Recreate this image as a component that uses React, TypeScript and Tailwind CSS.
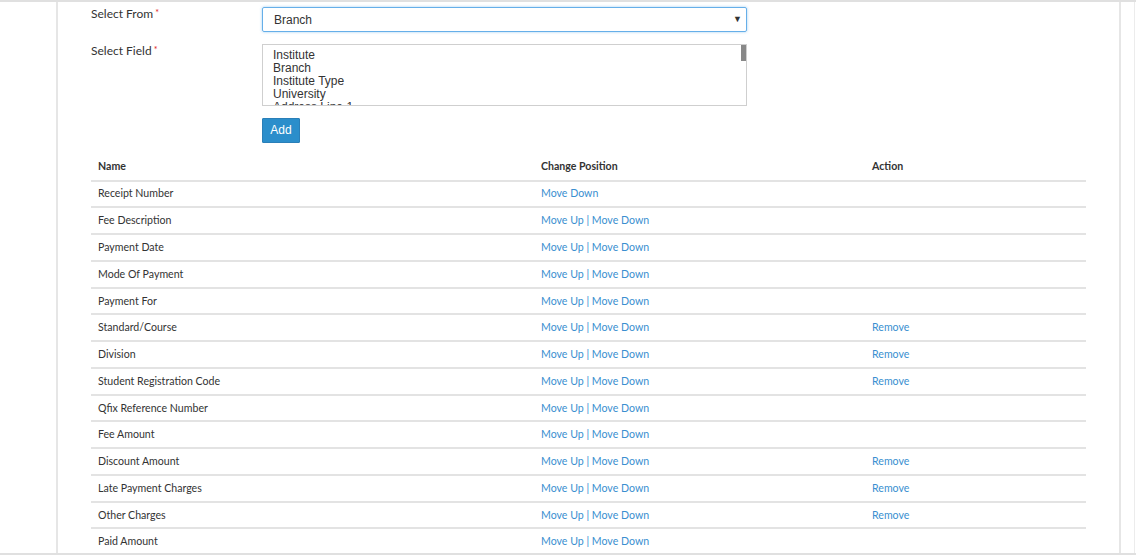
const fields = [
  { name: "Receipt Number", up: false, remove: false },
  { name: "Fee Description", up: true, remove: false },
  { name: "Payment Date", up: true, remove: false },
  { name: "Mode Of Payment", up: true, remove: false },
  { name: "Payment For", up: true, remove: false },
  { name: "Standard/Course", up: true, remove: true },
  { name: "Division", up: true, remove: true },
  { name: "Student Registration Code", up: true, remove: true },
  { name: "Qfix Reference Number", up: true, remove: false },
  { name: "Fee Amount", up: true, remove: false },
  { name: "Discount Amount", up: true, remove: true },
  { name: "Late Payment Charges", up: true, remove: true },
  { name: "Other Charges", up: true, remove: true },
  { name: "Paid Amount", up: true, remove: false },
];

const options = ["Institute", "Branch", "Institute Type", "University", "Address Line 1"];

function Label({ text }: { text: string }) {
  return (
    <label className="w-[171px] shrink-0 text-[12px] text-[#333] font-['Lato',sans-serif]">
      {text}
      <span className="relative -top-[2px] ml-[2px] text-[9px] text-[#e02020]">*</span>
    </label>
  );
}

export default function App() {
  return (
    <div className="h-[555px] overflow-hidden border-t-2 border-b-2 border-[#e0e0e0] bg-white font-['Lato',sans-serif]">
      <div className="flex h-full">
        <div className="ml-[56px] mr-[13px] h-full flex-1 border-x-2 border-[#e6e6e6] bg-white">
          <div className="pl-[33px] pr-[33px]">
            <div className="flex pt-[3px]">
              <Label text="Select From" />
              <div className="relative mt-[2px] flex h-[25px] w-[485px] items-center rounded-[2px] border border-[#66afe9] pl-[11px] text-[12px] text-[#333] font-['Liberation_Sans',Arial,sans-serif] shadow-[0_0_3px_rgba(102,175,233,0.6)]">
                Branch
                <span className="absolute right-[4px] top-[5px] text-[9px] text-[#333]">▼</span>
              </div>
            </div>

            <div className="mt-[10px] flex">
              <Label text="Select Field" />
              <div className="relative mt-[2px] h-[62px] w-[485px] overflow-hidden border border-[#cfcfcf] pl-[10px] pt-[4px] text-[12px] leading-[13px] text-[#333] font-['Liberation_Sans',Arial,sans-serif]">
                {options.map((o) => (
                  <div key={o}>{o}</div>
                ))}
                <div className="absolute right-0 top-0 h-full w-[5px] bg-white">
                  <div className="h-[16px] w-[5px] bg-[#888]" />
                </div>
              </div>
            </div>

            <div className="ml-[171px] mt-[10px]">
              <button className="h-[25px] w-[38px] rounded-[1px] border border-[#2a7fb8] bg-[#2b8ecb] text-[12px] text-white font-['Liberation_Sans',Arial,sans-serif]">
                Add
              </button>
            </div>

            <table className="mt-[12px] w-[995px] border-collapse text-[10.6px] text-[#333]">
              <thead>
                <tr className="h-[26px] border-b-2 border-[#e3e3e3]">
                  <th className="w-[443px] pl-[7px] text-left font-bold">Name</th>
                  <th className="w-[331px] pl-[7px] text-left font-bold">Change Position</th>
                  <th className="pl-[7px] text-left font-bold">Action</th>
                </tr>
              </thead>
              <tbody>
                {fields.map((f) => (
                  <tr key={f.name} className="h-[26.77px] border-b-2 border-[#e3e3e3]">
                    <td className="pl-[7px] pt-[1px]">{f.name}</td>
                    <td className="pl-[7px] pt-[1px] text-[#3a8fd0]">
                      {f.up && (
                        <>
                          <a>Move Up</a>
                          <span className="text-[#3a8fd0]"> | </span>
                        </>
                      )}
                      <a>Move Down</a>
                    </td>
                    <td className="pl-[7px] pt-[1px] text-[#3a8fd0]">{f.remove && <a>Remove</a>}</td>
                  </tr>
                ))}
              </tbody>
            </table>
          </div>
        </div>
        <div className="mr-[1px] h-full w-px bg-[#ececec]" />
      </div>
    </div>
  );
}
